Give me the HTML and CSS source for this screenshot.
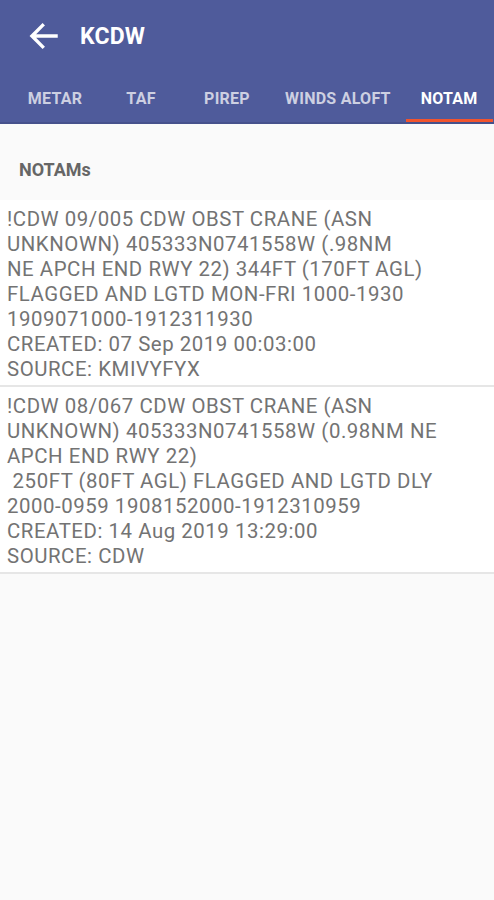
FILE: index.html
```html
<!DOCTYPE html>
<html lang="en">
<head>
    <meta charset="UTF-8">
    <meta name="viewport" content="width=device-width, initial-scale=1.0">
    <title>KCDW NOTAM</title>
    <link rel="stylesheet" href="styles.css">
</head>
<body>
    <!-- App bar with back arrow and station id -->
    <header class="app-bar">
        <div class="toolbar">
            <svg class="back-icon" viewBox="0 0 24 24" width="34" height="34">
                <path d="M20.5 12H4.5M11 4.5L3.5 12l7.5 7.5" fill="none" stroke="#fff" stroke-width="2.4" stroke-linecap="square"/>
            </svg>
            <h1 class="title">KCDW</h1>
        </div>

        <!-- Report tabs -->
        <nav class="tabs">
            <div class="tab">METAR</div>
            <div class="tab">TAF</div>
            <div class="tab">PIREP</div>
            <div class="tab">WINDS ALOFT</div>
            <div class="tab active">NOTAM</div>
        </nav>
    </header>

    <main class="content">
        <h2 class="section-title">NOTAMs</h2>

        <div class="notam-list">
            <div class="notam-item">
                !CDW 09/005 CDW OBST CRANE (ASN<br>
                UNKNOWN) 405333N0741558W (.98NM<br>
                NE APCH END RWY 22) 344FT (170FT AGL)<br>
                FLAGGED AND LGTD MON-FRI 1000-1930<br>
                1909071000-1912311930<br>
                CREATED: 07 Sep 2019 00:03:00<br>
                SOURCE: KMIVYFYX
            </div>
            <div class="notam-item">
                !CDW 08/067 CDW OBST CRANE (ASN<br>
                UNKNOWN) 405333N0741558W (0.98NM NE<br>
                APCH END RWY 22)<br>
                &nbsp;250FT (80FT AGL) FLAGGED AND LGTD DLY<br>
                2000-0959 1908152000-1912310959<br>
                CREATED: 14 Aug 2019 13:29:00<br>
                SOURCE: CDW
            </div>
        </div>
    </main>
</body>
</html>
```

FILE: styles.css
```css
* {
    margin: 0;
    padding: 0;
    box-sizing: border-box;
}

body {
    font-family: Roboto, 'Liberation Sans', sans-serif;
    background-color: #fafafa;
    width: 494px;
    min-height: 900px;
}

/* Header */
.app-bar {
    background-color: #4f5b9b;
    color: white;
    border-bottom: 2px solid #46518c;
}

.toolbar {
    height: 72px;
    display: flex;
    align-items: center;
    padding-left: 27px;
}

.back-icon {
    display: block;
}

.title {
    font-size: 23px;
    font-weight: 700;
    margin-left: 19px;
    letter-spacing: 0.2px;
}

.tabs {
    display: flex;
    height: 50px;
    padding-left: 12px;
    overflow: hidden;
}

.tab {
    flex-shrink: 0;
    min-width: 86px;
    padding: 5px 15px 0;
    display: flex;
    align-items: center;
    justify-content: center;
    white-space: nowrap;
    font-size: 16px;
    font-weight: 700;
    letter-spacing: 0.25px;
    color: rgba(255, 255, 255, 0.72);
    border-bottom: 3px solid transparent;
}

.tab.active {
    color: #fff;
    border-bottom-color: #f2542d;
}

/* Content */
.section-title {
    font-size: 18px;
    font-weight: 700;
    color: #666;
    padding: 35px 19px 20px;
}

.notam-item {
    background-color: #fff;
    color: #737373;
    font-size: 20.4px;
    letter-spacing: 0.55px;
    line-height: 25px;
    padding: 7px 7px 3px;
    white-space: nowrap;
    border-bottom: 2px solid #e6e6e6;
}
```
